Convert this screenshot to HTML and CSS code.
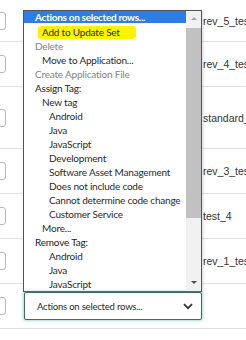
FILE: index.html
```html
<!DOCTYPE html>
<html>
    <head>
        <meta charset="utf-8" />
        <title>Actions on selected rows</title>
        <link rel="stylesheet" href="styles.css">
    </head>

    <body>
        <div class="m-list">
            <div class="row h41"><span class="check"></span><span class="name">rev_5_test</span></div>
            <div class="row h45"><span class="check"></span><span class="name">rev_4_test</span></div>
            <div class="row h62"><span class="check"></span><span class="name">standard_test</span></div>
            <div class="row h45"><span class="check"></span><span class="name">rev_3_test</span></div>
            <div class="row h45"><span class="check"></span><span class="name">test_4</span></div>
            <div class="row h45"><span class="check"></span><span class="name">rev_1_test</span></div>
            <div class="row h45"><span class="check"></span><span class="name"></span></div>
        </div>

        <div class="m-actions">
            <div class="listbox">
                <ul class="opts">
                    <li class="sel">Actions on selected rows...</li>
                    <li class="l2"><span class="mark">Add to Update Set</span></li>
                    <li class="off">Delete</li>
                    <li class="l2">Move to Application...</li>
                    <li class="off">Create Application File</li>
                    <li class="grp">Assign Tag:</li>
                    <li class="l2">New tag</li>
                    <li class="l3">Android</li>
                    <li class="l3">Java</li>
                    <li class="l3">JavaScript</li>
                    <li class="l3">Development</li>
                    <li class="l3">Software Asset Management</li>
                    <li class="l3">Does not include code</li>
                    <li class="l3">Cannot determine code change</li>
                    <li class="l3">Customer Service</li>
                    <li class="l2">More...</li>
                    <li class="grp">Remove Tag:</li>
                    <li class="l3">Android</li>
                    <li class="l3">Java</li>
                    <li class="l3">JavaScript</li>
                </ul>
                <div class="scroll">
                    <span class="arr up"></span>
                    <span class="thumb"></span>
                    <span class="arr down"></span>
                </div>
            </div>
            <div class="select">
                <span>Actions on selected rows...</span>
                <svg width="10" height="7" viewBox="0 0 10 7"><path d="M1 1.2 L5 5.2 L9 1.2" fill="none" stroke="#333" stroke-width="1.8"/></svg>
            </div>
        </div>
    </body>
</html>
```

FILE: styles.css
```css
* {
    margin: 0;
    padding: 0;
}
li {
    list-style: none;
}
body {
    background: #fff;
    overflow: hidden;
    font-family: "Liberation Sans", Arial, sans-serif;
}

.m-list {
    width: 246px;
    overflow: hidden;
}
.m-list .row {
    display: flex;
    align-items: center;
    border-bottom: 1px solid #e2e2e2;
    box-sizing: border-box;
}
.m-list .h41 { height: 42px; }
.m-list .h45 { height: 45px; }
.m-list .h62 { height: 62px; }
.m-list .check {
    flex: none;
    width: 18px;
    height: 18px;
    margin-left: -12px;
    border: 1px solid #b8b8b8;
    border-radius: 3px;
    box-sizing: border-box;
}
.m-list .name {
    margin-left: 197px;
    font-size: 10.5px;
    color: #333;
    white-space: nowrap;
}

.m-actions {
    position: absolute;
    left: 23px;
    top: 10px;
    width: 179px;
    font-family: Lato, "Open Sans", sans-serif;
    font-size: 10px;
    letter-spacing: -0.2px;
}
.m-actions .listbox {
    display: flex;
    height: 282px;
    border: 1px solid #555;
    background: #fff;
    box-sizing: border-box;
    box-shadow: 1px 1px 3px rgba(0, 0, 0, 0.18);
}
.m-actions .opts {
    flex: 1;
    overflow: hidden;
}
.m-actions .opts li {
    height: 14px;
    line-height: 14px;
    padding-left: 11px;
    color: #2b2b2b;
    white-space: nowrap;
}
.m-actions .opts .sel {
    background: #2c7ee6;
    color: #fff;
    font-weight: bold;
    letter-spacing: -0.3px;
    height: 12px;
    line-height: 12px;
    margin-bottom: 2px;
}
.m-actions .opts .l2 { padding-left: 18px; }
.m-actions .opts .l3 { padding-left: 25px; }
.m-actions .opts .off { color: #858585; }
.m-actions .opts .grp { color: #222; }
.m-actions .mark {
    display: inline-block;
    height: 13px;
    line-height: 13px;
    margin-left: -4px;
    padding: 0 16px 0 4px;
    background: #fbf300;
    border-radius: 3px;
}

.m-actions .scroll {
    display: flex;
    flex-direction: column;
    align-items: center;
    width: 15px;
    background: #f1f1f1;
}
.m-actions .arr {
    width: 0;
    height: 0;
    border-left: 3px solid transparent;
    border-right: 3px solid transparent;
}
.m-actions .up {
    margin-top: 6px;
    border-bottom: 3px solid #a3a3a3;
}
.m-actions .down {
    margin-top: auto;
    margin-bottom: 7px;
    border-top: 3px solid #505050;
}
.m-actions .thumb {
    width: 15px;
    height: 190px;
    margin-top: 8px;
    background: #c1c1c1;
}

.m-actions .select {
    display: flex;
    align-items: center;
    justify-content: space-between;
    height: 28px;
    margin-left: 1px;
    padding: 0 8px 0 12px;
    border: 1px solid #3f6b62;
    border-radius: 2px;
    background: #fff;
    box-sizing: border-box;
    color: #2b2b2b;
    font-size: 9.5px;
    box-shadow: 0 0 3px 1px rgba(70, 170, 150, 0.45);
}
```
